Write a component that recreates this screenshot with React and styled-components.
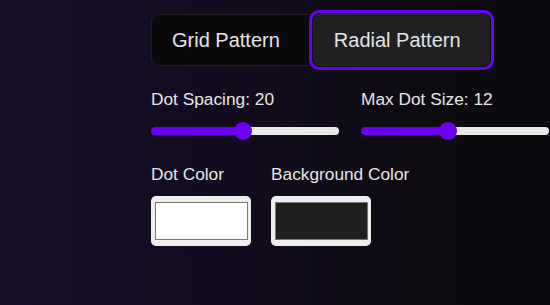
import { useState } from 'react';
import styled, { createGlobalStyle } from 'styled-components';

const purple = '#6a00f4';

const GlobalStyle = createGlobalStyle`
  html, body {
    margin: 0;
    padding: 0;
    height: 100%;
  }
  body {
    background: linear-gradient(90deg, #170d2a 0%, #140c23 30%, #100b18 60%, #0d0b10 85%);
    font-family: 'Liberation Sans', Arial, sans-serif;
    color: #e6e6e6;
    overflow: hidden;
  }
`;

const Page = styled.div`
  width: 550px;
  height: 305px;
  box-sizing: border-box;
  padding: 14px 0 0 151px;
  display: flex;
  flex-direction: column;
`;

const TabGroup = styled.div`
  display: flex;
  gap: 12px;
  width: 340px;
  height: 52px;
  box-sizing: border-box;
  border: 1px solid #1e1d22;
  border-radius: 7px;
  background: #0a090c;
`;

const Tab = styled.button`
  font-family: inherit;
  font-size: 20px;
  color: #e4e4e4;
  text-align: left;
  background: ${({ $active }) => ($active ? '#202022' : 'transparent')};
  border: 1px solid ${({ $active }) => ($active ? '#0e0d10' : 'transparent')};
  border-radius: 7px;
  padding: 0 19px 0 ${({ $active }) => ($active ? 21 : 19)}px;
  margin: ${({ $active }) => ($active ? '-2px -1px -2px 0' : '0')};
  flex: ${({ $active }) => ($active ? 1 : 'none')};
  box-shadow: ${({ $active }) => ($active ? `0 0 0 3px ${purple}` : 'none')};
  cursor: pointer;
  outline: none;
`;

const SliderRow = styled.div`
  display: flex;
  gap: 22px;
  margin-top: 23px;
`;

const Field = styled.div`
  display: flex;
  flex-direction: column;
  gap: ${({ $gap }) => $gap}px;
`;

const Label = styled.label`
  font-size: 17.3px;
  line-height: 20px;
  color: #e6e6e6;
  white-space: nowrap;
`;

const Range = styled.input`
  -webkit-appearance: none;
  appearance: none;
  width: 188px;
  height: 18px;
  margin: 0;
  background: transparent;

  &::-webkit-slider-runnable-track {
    height: 8px;
    border-radius: 4px;
    background: linear-gradient(
      90deg,
      ${purple} 0%,
      ${purple} var(--fill),
      #e9e9e9 var(--fill),
      #e9e9e9 100%
    );
  }

  &::-webkit-slider-thumb {
    -webkit-appearance: none;
    appearance: none;
    width: 18px;
    height: 18px;
    margin-top: -5px;
    border-radius: 50%;
    background: ${purple};
    border: none;
  }
`;

const ColorRow = styled.div`
  display: flex;
  gap: 20px;
  margin-top: 24px;
`;

const Swatch = styled.input`
  -webkit-appearance: none;
  appearance: none;
  width: 100px;
  height: 50px;
  box-sizing: border-box;
  padding: 6px 3px 6px 4px;
  border: none;
  border-radius: 5px;
  background: #eeeeee;
  cursor: pointer;

  &::-webkit-color-swatch-wrapper {
    padding: 0;
  }

  &::-webkit-color-swatch {
    border: 1px solid #777777;
    border-radius: 0;
  }
`;

function Slider({ label, value, min, max, onChange }) {
  const pct = (value - min) / (max - min);
  const fill = ((9 + pct * 170) / 188) * 100;
  return (
    <Field $gap={13}>
      <Label>
        {label}: {value}
      </Label>
      <Range
        type="range"
        min={min}
        max={max}
        value={value}
        onChange={(e) => onChange(Number(e.target.value))}
        style={{ '--fill': `${fill}%` }}
      />
    </Field>
  );
}

export default function App() {
  const [pattern, setPattern] = useState('radial');
  const [spacing, setSpacing] = useState(20);
  const [dotSize, setDotSize] = useState(12);
  const [dotColor, setDotColor] = useState('#ffffff');
  const [bgColor, setBgColor] = useState('#1f1f1f');

  return (
    <>
      <GlobalStyle />
      <Page>
        <TabGroup>
          <Tab $active={pattern === 'grid'} onClick={() => setPattern('grid')}>
            Grid Pattern
          </Tab>
          <Tab $active={pattern === 'radial'} onClick={() => setPattern('radial')}>
            Radial Pattern
          </Tab>
        </TabGroup>

        <SliderRow>
          <Slider label="Dot Spacing" value={spacing} min={1} max={40} onChange={setSpacing} />
          <Slider label="Max Dot Size" value={dotSize} min={1} max={25} onChange={setDotSize} />
        </SliderRow>

        <ColorRow>
          <Field $gap={12}>
            <Label>Dot Color</Label>
            <Swatch type="color" value={dotColor} onChange={(e) => setDotColor(e.target.value)} />
          </Field>
          <Field $gap={12}>
            <Label>Background Color</Label>
            <Swatch type="color" value={bgColor} onChange={(e) => setBgColor(e.target.value)} />
          </Field>
        </ColorRow>
      </Page>
    </>
  );
}
